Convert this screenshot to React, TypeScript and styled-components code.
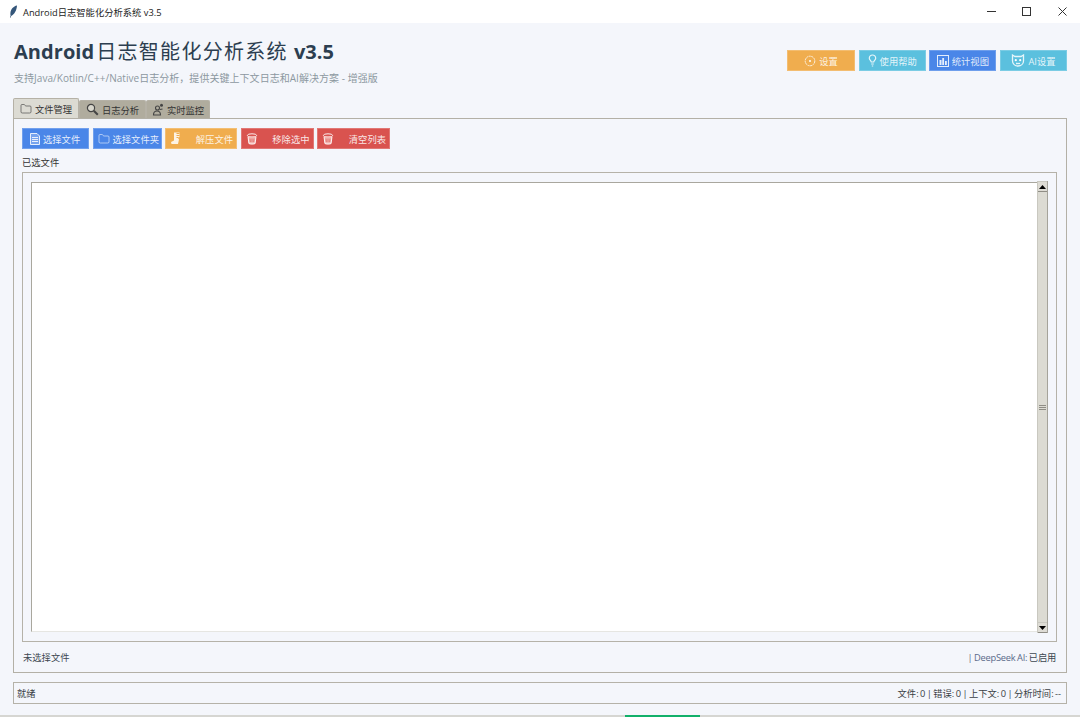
import React from 'react';
import styled, { createGlobalStyle } from 'styled-components';
import { Folder } from 'lucide-react';

const Global = createGlobalStyle`
  html, body { margin: 0; padding: 0; background: #f4f6fb; }
  body { font-family: "Noto Sans CJK SC", "Noto Sans", sans-serif; }
  * { box-sizing: border-box; }
`;
const cjk = `"Open Sans", "Noto Sans CJK SC", "Noto Sans", sans-serif`;

const Window = styled.div`
  width: 1080px; height: 717px; display: flex; flex-direction: column;
  background: #f4f6fb; overflow: hidden; color: #333;
  font-family: ${cjk};
`;
const TitleBar = styled.div`
  height: 23px; flex: none; background: #fff; display: flex; align-items: center;
  padding-left: 9px; font-size: 9.3px; color: #222;
`;
const AppName = styled.span` margin-left: 5px; flex: 1; `;
const WinControls = styled.div` display: flex; align-items: center; `;
const WinBtn = styled.div`
  width: 35.5px; height: 23px; display: flex; align-items: center; justify-content: center;
`;
const Main = styled.div`
  flex: 1; display: flex; flex-direction: column; padding: 0 13px; min-height: 0;
`;
const Header = styled.div`
  height: 75px; flex: none; display: flex; justify-content: space-between;
`;
const HeaderText = styled.div` padding-top: 13px; padding-left: 1px; `;
const Title = styled.div`
  font-size: 20px; line-height: 30px; font-weight: 700; color: #2c3e50; white-space: nowrap; letter-spacing: 0.05px;
`;
const TitleCjk = styled.span`
  font-weight: 400; letter-spacing: 1.3px; font-family: "Noto Sans CJK SC", sans-serif; margin: 0 6px 0 2px;
`;
const Subtitle = styled.div`
  font-size: 10px; line-height: 14px; margin-top: 4px; color: #8c98a0; white-space: nowrap; letter-spacing: 0.04px;
`;
const HeaderButtons = styled.div` display: flex; gap: 3.67px; padding-top: 27px; `;
const TopButton = styled.div<{ $bg: string; $w: number }>`
  width: ${p => p.$w}px; height: 21px; background: ${p => p.$bg};
  border: 1px solid rgba(255,255,255,0.2);
  color: rgba(255,255,255,0.85); font-size: 9.3px; display: flex; align-items: center; justify-content: center; gap: 3px;
`;
const Tabs = styled.div` height: 20px; flex: none; display: flex; align-items: flex-end; `;
const Tab = styled.div<{ $active?: boolean; $w: number }>`
  width: ${p => p.$w}px; height: ${p => (p.$active ? 20 : 18)}px;
  background: ${p => (p.$active ? '#dcdbd3' : '#b0ac9e')};
  border: 1px solid #b5b1a6; border-bottom: none; border-radius: 2px 2px 0 0;
  display: flex; align-items: center; justify-content: center; gap: 3px;
  font-size: 9.3px; color: #333;
`;
const Panel = styled.div`
  height: 555px; flex: none; border: 1px solid #b3b0a6;
  padding: 9px 9px 0 8px; display: flex; flex-direction: column;
`;
const Toolbar = styled.div` display: flex; gap: 3.5px; height: 21px; flex: none; `;
const ActionButton = styled.div<{ $bg: string; $w: number; $spread?: boolean; $pad?: number }>`
  width: ${p => p.$w}px; height: 21px; background: ${p => p.$bg};
  border: 1px solid rgba(255,255,255,0.22); color: rgba(255,255,255,0.88);
  font-size: 9.3px; display: flex; align-items: center;
  justify-content: ${p => (p.$spread ? 'space-between' : 'flex-start')};
  padding: ${p => (p.$spread ? '0 3px 0 4px' : `0 0 0 ${p.$pad ?? 7}px`)}; gap: 3px; white-space: nowrap;
`;
const GroupLabel = styled.div` font-size: 9.3px; line-height: 14px; margin-top: 7px; color: #333; `;
const FileGroup = styled.div`
  flex: none; height: 470px; margin-top: 2px; border: 1px solid #b5b2a8; padding: 9px 8px 8px 8px;
  display: flex;
`;
const ListBox = styled.div`
  flex: 1; background: #fff; border: 1px solid #a9a79e; border-right: none; border-bottom-color: #e6e6e2;
  margin-bottom: 1px;
`;
const ScrollBar = styled.div`
  width: 11px; flex: none; background: #dcdbd3; display: flex; flex-direction: column; margin-top: -1px;
  border-left: 1px solid #c9c8c0; border-right: 1px solid #a5a39a;
`;
const ScrollCap = styled.div`
  height: 11px; flex: none; background: #dedcd5;
  border-top: 1px solid #c9c8c0; border-bottom: 1px solid #8f8d85;
  display: flex; align-items: center; justify-content: center;
`;
const ScrollThumb = styled.div`
  flex: 1; display: flex; align-items: center; justify-content: center;
`;
const Grip = styled.div`
  width: 7px; height: 5px;
  background: repeating-linear-gradient(to bottom, #8f8d85 0 1px, #dcdbd3 1px 2px);
`;
const FooterRow = styled.div`
  display: flex; justify-content: space-between; align-items: center; flex: 1;
  padding: 0 1px 0 1px; font-size: 9.3px;
`;
const Muted = styled.span` color: #3c4650; `;
const Accent = styled.span` color: #5a6a8a; letter-spacing: -0.25px; word-spacing: -0.5px; `;
const StatusBar = styled.div`
  height: 22px; flex: none; margin-top: 9px; border: 1px solid #b5b2a8;
  display: flex; justify-content: space-between; align-items: center;
  padding: 0 5px 0 3px; font-size: 9.3px; color: #3a3f45;
`;
const StatusRight = styled.span` word-spacing: -1px; `;
const Bottom = styled.div`
  height: 2px; margin-top: 11px; flex: none; background: #d6d6d2; display: flex; padding-left: 625px;
`;
const Progress = styled.div` width: 75px; height: 2px; background: #12b06a; `;

const Feather = () => (
  <svg width="9" height="13" viewBox="0 0 9 13">
    <path d="M8 0.5C4.5 1.2 1.8 4 1.4 8c-.1 1 0 2 .2 2.6L1 12.5l.6.2.6-1.8C5.5 9.5 7.8 5 8 .5z" fill="#34567a" />
  </svg>
);
const DocIcon = () => (
  <svg width="10" height="12" viewBox="0 0 10 12">
    <path d="M.5.5h6.5l2.5 2.5v8.5H.5z" fill="rgba(255,255,255,.25)" stroke="#fff" strokeOpacity=".85" />
    <path d="M2 4.5h6M2 6.5h6M2 8.5h6" stroke="#fff" strokeOpacity=".85" />
  </svg>
);
const Bin = () => (
  <svg width="12" height="12" viewBox="0 0 12 12">
    <ellipse cx="6" cy="2.4" rx="4.6" ry="1.6" fill="none" stroke="#fff" strokeOpacity=".9" />
    <path d="M2 3.5l.9 7c.8.8 5.4.8 6.2 0l.9-7" fill="#f3b9b5" stroke="#fff" strokeOpacity=".9" />
    <path d="M4 5.5l.3 3.6M6 5.5v3.6M8 5.5l-.3 3.6" stroke="#d9534f" strokeWidth=".7" />
  </svg>
);
const Zip = () => (
  <svg width="12" height="13" viewBox="0 0 12 13">
    <path d="M4 .5h5.5V5L8 6l1 1.5-1 4.5H1.5L1 10l3-1.5z" fill="#fff" fillOpacity=".85" />
    <path d="M6.5 1.5h3M6.5 3.5h3M6.5 5.5h2" stroke="#f0ad4e" />
  </svg>
);
const Gear = () => (
  <svg width="12" height="12" viewBox="0 0 12 12" fill="none" stroke="#fff" strokeOpacity=".8">
    <circle cx="6" cy="6" r="4.8" strokeDasharray="2 .6" />
    <circle cx="6" cy="6" r="1" fill="#fff" stroke="none" />
  </svg>
);
const Bulb = () => (
  <svg width="9" height="13" viewBox="0 0 9 13" fill="none" stroke="#fff" strokeOpacity=".85" strokeWidth="1.2">
    <path d="M4.5 1a3.2 3.2 0 0 1 3.2 3.2c0 1.8-1.7 2.4-2 3.8H3.3c-.3-1.4-2-2-2-3.8A3.2 3.2 0 0 1 4.5 1z" />
    <path d="M3.2 10h2.6M3.8 12h1.4" />
  </svg>
);
const ChartBox = () => (
  <svg width="12" height="12" viewBox="0 0 12 12">
    <rect x=".5" y=".5" width="11" height="11" fill="none" stroke="#fff" strokeOpacity=".85" />
    <path d="M2.5 5h2v5h-2zM5.25 3h1.8v7h-1.8zM8 6h1.8v4H8z" fill="#fff" fillOpacity=".85" />
  </svg>
);
const Bot = () => (
  <svg width="14" height="13" viewBox="0 0 14 13" fill="none" stroke="#fff" strokeOpacity=".85" strokeWidth="1.3">
    <path d="M1.5 1L4 2.5h6L12.5 1v6c0 3-2.5 5-5.5 5s-5.5-2-5.5-5z" />
    <circle cx="4.8" cy="6.2" r="1.1" fill="#fff" stroke="none" />
    <circle cx="9.2" cy="6.2" r="1.1" fill="#fff" stroke="none" />
    <path d="M5 9.5h4" />
  </svg>
);
const Magnifier = () => (
  <svg width="13" height="13" viewBox="0 0 13 13" fill="none" stroke="#444">
    <circle cx="5" cy="5" r="3.6" strokeWidth="1.2" fill="#d8d6cc" />
    <path d="M7.8 7.8l4 4" strokeWidth="2" />
  </svg>
);
const Person = () => (
  <svg width="12" height="13" viewBox="0 0 12 13" fill="none" stroke="#444" strokeWidth="1.1">
    <circle cx="5.5" cy="5" r="2" />
    <path d="M1.5 12c0-2.5 1.5-4 3.5-4s3.500 1.500 3.500 4z" />
    <circle cx="9.5" cy="2.2" r="1.5" fill="#444" stroke="none" />
    <path d="M8 6.500l2.500-.5" />
  </svg>
);
const ArrowUp = () => (
  <svg width="7" height="4" viewBox="0 0 7 4"><path d="M3.5 0L7 4H0z" fill="#000" /></svg>
);
const ArrowDown = () => (
  <svg width="7" height="4" viewBox="0 0 7 4"><path d="M0 0h7L3.5 4z" fill="#000" /></svg>
);

const iconW = { size: 12, strokeWidth: 1.3, color: 'rgba(255,255,255,.85)' };
const iconT = { size: 12, strokeWidth: 1.3, color: '#444' };

export default function App() {
  return (
    <Window>
      <Global />
      <TitleBar>
        <Feather />
        <AppName>Android日志智能化分析系统 v3.5</AppName>
        <WinControls>
          <WinBtn><svg width="9" height="9" viewBox="0 0 9 9"><path d="M0 4.500h9" stroke="#333" /></svg></WinBtn>
          <WinBtn><svg width="9" height="9" viewBox="0 0 9 9"><rect x=".5" y=".5" width="8" height="8" fill="none" stroke="#333" /></svg></WinBtn>
          <WinBtn><svg width="9" height="9" viewBox="0 0 9 9"><path d="M.5.5l8 8M8.500.5l-8 8" stroke="#333" /></svg></WinBtn>
        </WinControls>
      </TitleBar>
      <Main>
        <Header>
          <HeaderText>
            <Title>Android<TitleCjk>日志智能化分析系统</TitleCjk>v3.5</Title>
            <Subtitle>支持Java/Kotlin/C++/Native日志分析，提供关键上下文日志和AI解决方案 - 增强版</Subtitle>
          </HeaderText>
          <HeaderButtons>
            <TopButton $bg="#f0ad4e" $w={68}><Gear />设置</TopButton>
            <TopButton $bg="#5bc0de" $w={67}><Bulb />使用帮助</TopButton>
            <TopButton $bg="#4a86e8" $w={67}><ChartBox />统计视图</TopButton>
            <TopButton $bg="#5bc0de" $w={67}><Bot />AI设置</TopButton>
          </HeaderButtons>
        </Header>
        <Tabs>
          <Tab $active $w={66}><Folder {...iconT} />文件管理</Tab>
          <Tab $w={67}><Magnifier />日志分析</Tab>
          <Tab $w={64}><Person />实时监控</Tab>
        </Tabs>
        <Panel>
          <Toolbar>
            <ActionButton $bg="#4a86e8" $w={67}><DocIcon />选择文件</ActionButton>
            <ActionButton $bg="#4a86e8" $w={69} $pad={4}><Folder {...iconW} />选择文件夹</ActionButton>
            <ActionButton $bg="#f0ad4e" $w={72} $spread><Zip />解压文件</ActionButton>
            <ActionButton $bg="#d9534f" $w={73} $spread><Bin />移除选中</ActionButton>
            <ActionButton $bg="#d9534f" $w={73} $spread><Bin />清空列表</ActionButton>
          </Toolbar>
          <GroupLabel>已选文件</GroupLabel>
          <FileGroup>
            <ListBox />
            <ScrollBar>
              <ScrollCap><ArrowUp /></ScrollCap>
              <ScrollThumb><Grip /></ScrollThumb>
              <ScrollCap><ArrowDown /></ScrollCap>
            </ScrollBar>
          </FileGroup>
          <FooterRow>
            <Muted>未选择文件</Muted>
            <Accent>| DeepSeek AI: <Muted>已启用</Muted></Accent>
          </FooterRow>
        </Panel>
        <StatusBar>
          <span>就绪</span>
          <StatusRight>文件: 0 | 错误: 0 | 上下文: 0 | 分析时间: --</StatusRight>
        </StatusBar>
      </Main>
      <Bottom><Progress /></Bottom>
    </Window>
  );
}
